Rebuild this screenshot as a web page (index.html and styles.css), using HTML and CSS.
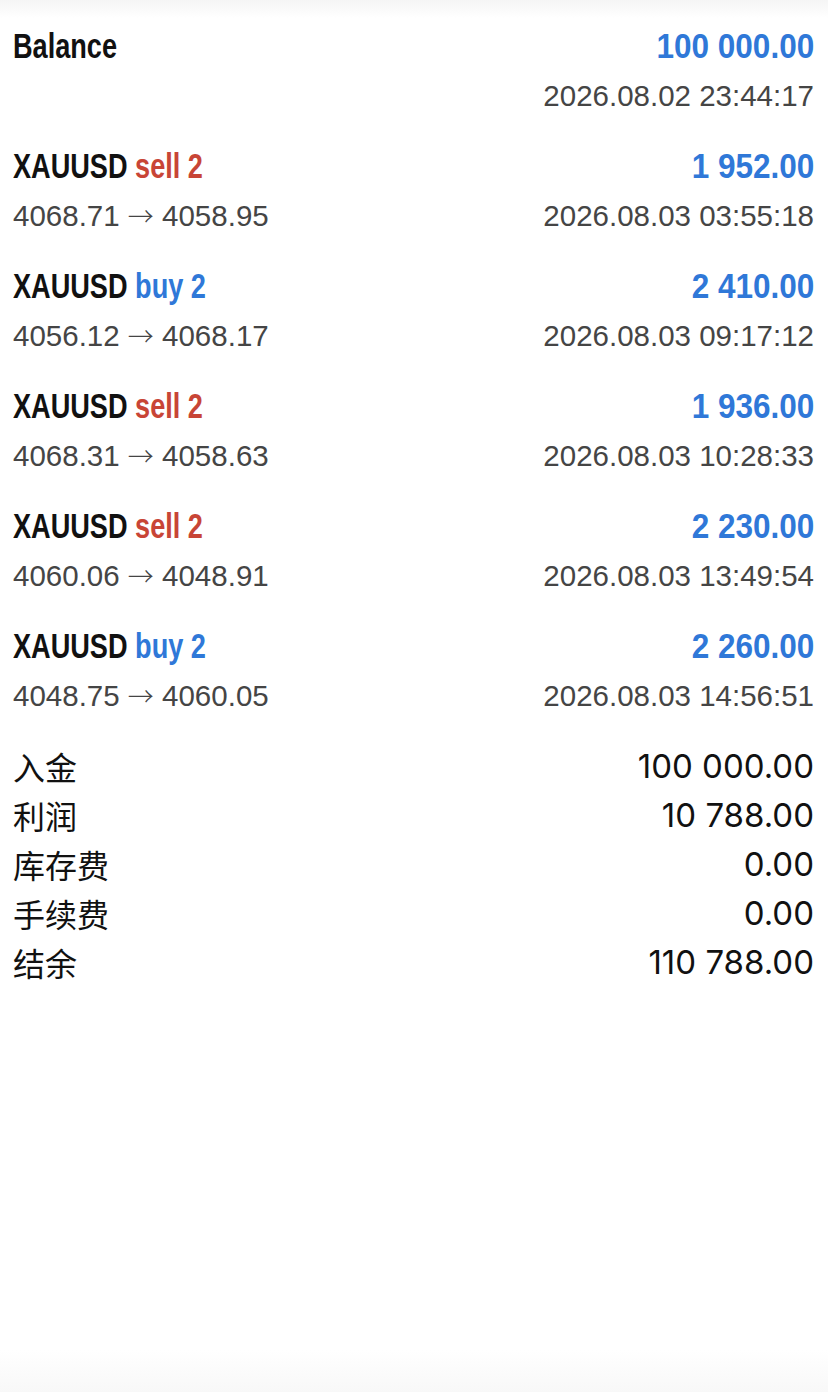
FILE: index.html
```html
<!DOCTYPE html>
<html lang="zh">
<head>
<meta charset="utf-8">
<link rel="stylesheet" href="styles.css">
</head>
<body>
<div class="page">
  <div class="deal">
    <div class="line">
      <span class="title">Balance</span>
      <span class="amount">100 000.00</span>
    </div>
    <div class="line sub">
      <span></span>
      <span>2026.08.02 23:44:17</span>
    </div>
  </div>

  <div class="deal">
    <div class="line">
      <span class="title">XAUUSD <span class="sell">sell 2</span></span>
      <span class="amount">1 952.00</span>
    </div>
    <div class="line sub">
      <span>4068.71 <span class="arrow">→</span> 4058.95</span>
      <span>2026.08.03 03:55:18</span>
    </div>
  </div>

  <div class="deal">
    <div class="line">
      <span class="title">XAUUSD <span class="buy">buy 2</span></span>
      <span class="amount">2 410.00</span>
    </div>
    <div class="line sub">
      <span>4056.12 <span class="arrow">→</span> 4068.17</span>
      <span>2026.08.03 09:17:12</span>
    </div>
  </div>

  <div class="deal">
    <div class="line">
      <span class="title">XAUUSD <span class="sell">sell 2</span></span>
      <span class="amount">1 936.00</span>
    </div>
    <div class="line sub">
      <span>4068.31 <span class="arrow">→</span> 4058.63</span>
      <span>2026.08.03 10:28:33</span>
    </div>
  </div>

  <div class="deal">
    <div class="line">
      <span class="title">XAUUSD <span class="sell">sell 2</span></span>
      <span class="amount">2 230.00</span>
    </div>
    <div class="line sub">
      <span>4060.06 <span class="arrow">→</span> 4048.91</span>
      <span>2026.08.03 13:49:54</span>
    </div>
  </div>

  <div class="deal">
    <div class="line">
      <span class="title">XAUUSD <span class="buy">buy 2</span></span>
      <span class="amount">2 260.00</span>
    </div>
    <div class="line sub">
      <span>4048.75 <span class="arrow">→</span> 4060.05</span>
      <span>2026.08.03 14:56:51</span>
    </div>
  </div>

  <div class="summary">
    <div class="sum-row"><span class="label">入金</span><span class="value">100 000.00</span></div>
    <div class="sum-row"><span class="label">利润</span><span class="value">10 788.00</span></div>
    <div class="sum-row"><span class="label">库存费</span><span class="value">0.00</span></div>
    <div class="sum-row"><span class="label">手续费</span><span class="value">0.00</span></div>
    <div class="sum-row"><span class="label">结余</span><span class="value">110 788.00</span></div>
  </div>
</div>
</body>
</html>
```

FILE: styles.css
```css
html, body {
  margin: 0;
  padding: 0;
  background: #ffffff;
}
body {
  width: 828px;
  height: 1392px;
  overflow: hidden;
  background: linear-gradient(to bottom, #f5f5f5 0px, #ffffff 18px, #ffffff 1350px, #f8f8f8 1392px);
}
.page {
  padding: 21px 14px 0 13px;
  display: flex;
  flex-direction: column;
  gap: 20px;
}
.deal {
  display: flex;
  flex-direction: column;
}
.line {
  height: 50px;
  display: flex;
  justify-content: space-between;
  align-items: center;
}
.title, .amount {
  display: inline-block;
  font-family: "Liberation Sans", Arial, sans-serif;
  font-weight: 700;
  font-size: 35px;
  color: #111111;
  white-space: nowrap;
}
.title {
  transform: scaleX(0.775);
  transform-origin: left center;
}
.amount {
  color: #2f78d8;
  transform: scaleX(0.9);
  transform-origin: right center;
}
.sell { color: #c84536; }
.buy { color: #2f78d8; }
.sub {
  font-family: "Liberation Sans", Arial, sans-serif;
  font-size: 29.5px;
  line-height: 34px;
  color: #454545;
}
.sub > span {
  line-height: 34px;
}
.arrow {
  font-family: "Noto Sans CJK SC", sans-serif;
  font-weight: 300;
  font-size: 26px;
  line-height: 0;
}
.summary {
  display: flex;
  flex-direction: column;
}
.sum-row {
  height: 49px;
  display: flex;
  justify-content: space-between;
  align-items: center;
}
.label {
  font-family: "Noto Sans CJK SC", sans-serif;
  font-size: 32px;
  color: #111111;
}
.value {
  font-family: Inter, "Noto Sans", sans-serif;
  font-size: 33px;
  color: #111111;
}
```
